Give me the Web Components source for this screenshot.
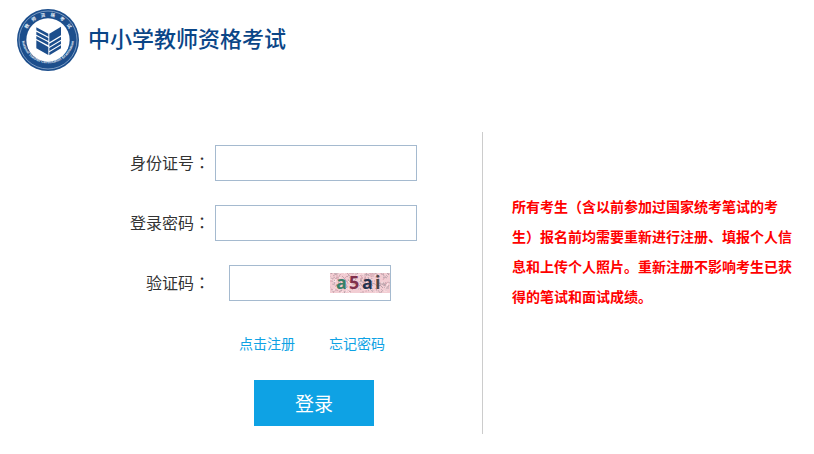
<!DOCTYPE html>
<html lang="zh-CN">
<head>
<meta charset="utf-8">
<meta name="viewport" content="width=device-width, initial-scale=1">
<title>中小学教师资格考试</title>
<style>
body{margin:0;background:#fff;color:#333;font-family:"Noto Sans CJK SC",sans-serif;font-size:16px}
</style>
</head>
<body>
<exam-page></exam-page>
<script>
const define = (name, html, init) => customElements.define(name, class extends HTMLElement {
  connectedCallback() {
    if (this.shadowRoot) return;
    const t = document.createElement('template');
    t.innerHTML = html;
    this.attachShadow({mode: 'open'}).append(t.content.cloneNode(true));
    if (init) init(this, this.shadowRoot);
  }
});

define('exam-logo', `
<style>:host{display:block;width:62px;height:62px}svg{display:block;width:100%;height:100%}</style>
<svg viewBox="0 0 186 186" role="img" aria-label="徽标">
  <defs>
    <path id="top" d="M22 93a71 71 0 0 1 142 0"/>
    <path id="bottom" d="M14 84a79 79 0 1 0 158 0"/>
  </defs>
  <circle cx="93" cy="93" r="93" fill="#1c4e8c"/>
  <circle cx="93" cy="93" r="87" fill="none" stroke="#a9c0dc" stroke-width="2"/>
  <circle cx="93" cy="93" r="65" fill="#fff"/>
  <g fill="#e6eef7">
    <text font-family="Noto Sans CJK SC,sans-serif" font-size="14" font-weight="700"><textPath href="#top" startOffset="50%" text-anchor="middle">教&emsp;师&emsp;资&emsp;格&emsp;考&emsp;试</textPath></text>
    <text font-family="Liberation Sans,sans-serif" font-size="11" font-weight="700"><textPath href="#bottom" startOffset="50%" text-anchor="middle">National Teacher Certification Examination</textPath></text>
  </g>
  <g fill="#1c4e8c">
    <path d="M58 55l36 19v9L58 64zM58 68l36 19v9L58 77zM58 81l36 19v9L58 90z"/>
    <path d="M58 94l36 20v24L58 118z"/>
    <path d="M132 53v26L97 100V74z"/>
    <path d="M132 83v9L97 113v-9zM132 96v9L97 126v-9zM132 109v9L97 139v-9z"/>
  </g>
</svg>`);

define('exam-header', `
<style>
:host{display:flex;align-items:center;gap:9px;padding:9px 17px 0}
h1{margin:0;font-size:22px;line-height:32px;font-weight:500;color:#0b4687;padding-bottom:6px}
</style>
<exam-logo></exam-logo><h1><slot></slot></h1>`);

define('captcha-image', `
<style>:host{display:block;width:60px;height:20px;flex:none}svg{display:block;overflow:visible}</style>
<svg width="60" height="20" viewBox="0 0 60 20" role="img" aria-label="验证码图片">
  <rect width="60" height="20" fill="#f2cdd3"/><svg id="noise" width="60" height="20" style="overflow:hidden" fill="none" stroke-width="1"></svg>
  <g font-family="Open Sans,sans-serif" font-weight="700" font-size="18">
    <text x="6" y="16" fill="#378069">a</text><text x="19" y="16" fill="#81304c">5</text><text x="32" y="16" fill="#24334f">a</text><text x="45" y="16" fill="#4b4544">i</text>
  </g>
</svg>`, (host, root) => {
  let seed = 7;
  const rnd = n => (seed = (seed * 1103515245 + 12345) % 2147483648) / 2147483648 * n;
  const colors = ['#c9a4ad', '#b9a3ab', '#dba9b4', '#c9b1b8', '#fbe3e6'];
  let s = '';
  for (let i = 0; i < 240; i++)
    s += `<path stroke="${colors[i % 5]}" d="M${rnd(60) | 0} ${rnd(20) | 0}l${(rnd(7) | 0) - 3} ${(rnd(7) | 0) - 3}"/>`;
  root.getElementById('noise').innerHTML = s;
});

define('form-field', `
<style>
:host{display:grid;grid-template-columns:80px minmax(0,202px);column-gap:5px;align-items:center}
label{text-align:right;font-size:16px;line-height:24px;padding-bottom:2px;white-space:nowrap}
.colon{font-family:"Noto Sans CJK TC",sans-serif}
.box{display:flex;align-items:center;box-sizing:border-box;height:36px;border:1px solid #a5bacf;background:#fff}
:host([short]) .box{margin:0 26px 0 14px}
input{flex:1;min-width:0;height:100%;box-sizing:border-box;border:0;padding:0 8px;background:none;font:inherit;color:inherit;outline:0}
.box:focus-within{border-color:#0ea2e4}
</style>
<label for="field"><span id="caption"></span><span class="colon" lang="zh-TW">：</span></label>
<div class="box"><input id="field"><slot></slot></div>`, (host, root) => {
  root.getElementById('caption').textContent = host.getAttribute('label');
  root.getElementById('field').type = host.getAttribute('type') || 'text';
});

define('login-form', `
<style>
:host{display:block}
form{display:flex;flex-direction:column;gap:24px}
nav{display:flex;gap:34px;padding:7px 0 1px 109px}
a{color:#0ea2e4;font-size:14px;line-height:22px;text-decoration:none}
button{margin:1px 0 0 124px;width:120px;height:46px;border:0;padding:0 0 2px;background:#0ea2e4;color:#fff;font:inherit;font-size:19px;cursor:pointer}
</style>
<form>
  <form-field label="身份证号"></form-field>
  <form-field label="登录密码" type="password"></form-field>
  <form-field label="验证码" short><captcha-image></captcha-image></form-field>
  <nav><a href="#register">点击注册</a><a href="#forgot">忘记密码</a></nav>
  <button type="submit">登录</button>
</form>`);

define('exam-notice', `
<style>
:host{display:block}
p{margin:0;color:#f00;font-size:14px;line-height:30px;font-weight:700}
</style>
<p><slot></slot></p>`);

define('exam-page', `
<style>
:host{display:block}
main{display:grid;grid-template-columns:483fr 331fr;margin:61px 0 20px}
.login{display:flex;justify-content:flex-end;border-right:1px solid #ccc;padding:13px 65px 8px 16px}
.notice{padding:59px 20px 0 29px}
</style>
<exam-header>中小学教师资格考试</exam-header>
<main>
  <section class="login"><login-form></login-form></section>
  <aside class="notice"><exam-notice>所有考生（含以前参加过国家统考笔试的考生）报名前均需要重新进行注册、填报个人信息和上传个人照片。重新注册不影响考生已获得的笔试和面试成绩。</exam-notice></aside>
</main>`);
</script>
</body>
</html>
